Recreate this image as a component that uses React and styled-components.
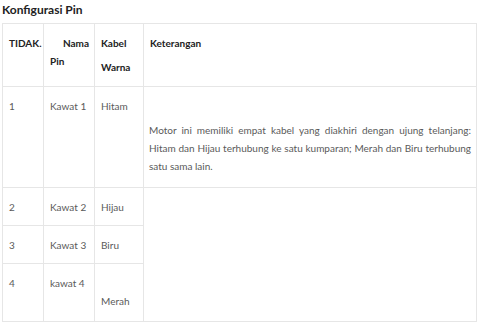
import React from "react";
import styled, { createGlobalStyle } from "styled-components";

const GlobalStyle = createGlobalStyle`
	body {
		margin: 0;
		background: #ffffff;
		font-family: Lato, "Open Sans", sans-serif;
	}
`;

const rows = [
	{ no: "1", pin: "Kawat 1", color: "Hitam" },
	{ no: "2", pin: "Kawat 2", color: "Hijau" },
	{ no: "3", pin: "Kawat 3", color: "Biru" },
	{ no: "4", pin: "kawat 4", color: "Merah", dropColor: true },
];

function App() {
	return (
		<>
			<GlobalStyle />
			<Page>
				<Title>Konfigurasi Pin</Title>
				<Table>
					<colgroup>
						<col style={{ width: 41 }} />
						<col style={{ width: 51 }} />
						<col style={{ width: 49 }} />
						<col />
					</colgroup>
					<thead>
						<tr>
							<Head>TIDAK.</Head>
							<Head>
								<Line $align="right">Nama</Line>
								<Line>Pin</Line>
							</Head>
							<Head>
								<Line>Kabel</Line>
								<Line $gap={6}>Warna</Line>
							</Head>
							<Head>Keterangan</Head>
						</tr>
					</thead>
					<tbody>
						{rows.map((row, i) => (
							<tr key={row.no}>
								<Cell>{row.no}</Cell>
								<Cell>{row.pin}</Cell>
								<Cell $tall={row.dropColor}>
									{row.dropColor && <br />}
									{row.color}
								</Cell>
								{i === 0 && <Description>
									Motor ini memiliki empat kabel yang diakhiri dengan ujung
									telanjang: Hitam dan Hijau terhubung ke satu kumparan; Merah
									dan Biru terhubung satu sama lain.
								</Description>}
								{i === 1 && <Cell rowSpan={3} />}
							</tr>
						))}
					</tbody>
				</Table>
			</Page>
		</>
	);
}

export default App;

const Page = styled.div`
	padding: 2px 4px 0 2px;
`;

const Title = styled.div`
	font-size: 12px;
	font-weight: 700;
	line-height: 15px;
	color: #222222;
	margin-bottom: 6px;
`;

const Table = styled.table`
	width: 475px;
	border-collapse: collapse;
	table-layout: fixed;
	border: 1px solid #e6e6e6;
`;

const Head = styled.th`
	border: 1px solid #e6e6e6;
	padding: 10px 5px 10px 6px;
	vertical-align: top;
	text-align: left;
	font-size: 10px;
	font-weight: 700;
	line-height: 18px;
	color: #222222;
`;

const Line = styled.span`
	display: block;
	text-align: ${(p) => p.$align || "left"};
	margin-top: ${(p) => (p.$gap ? `${p.$gap}px` : "0")};
`;

const Cell = styled.td`
	border: 1px solid #e6e6e6;
	padding: 10px 5px ${(p) => (p.$tall ? "11px" : "9px")} 6px;
	vertical-align: top;
	font-size: 10px;
	line-height: 18px;
	color: #5a5a5a;
`;

const Description = styled(Cell)`
	padding: 34px 5px 12px 5px;
	text-align: justify;
`;
